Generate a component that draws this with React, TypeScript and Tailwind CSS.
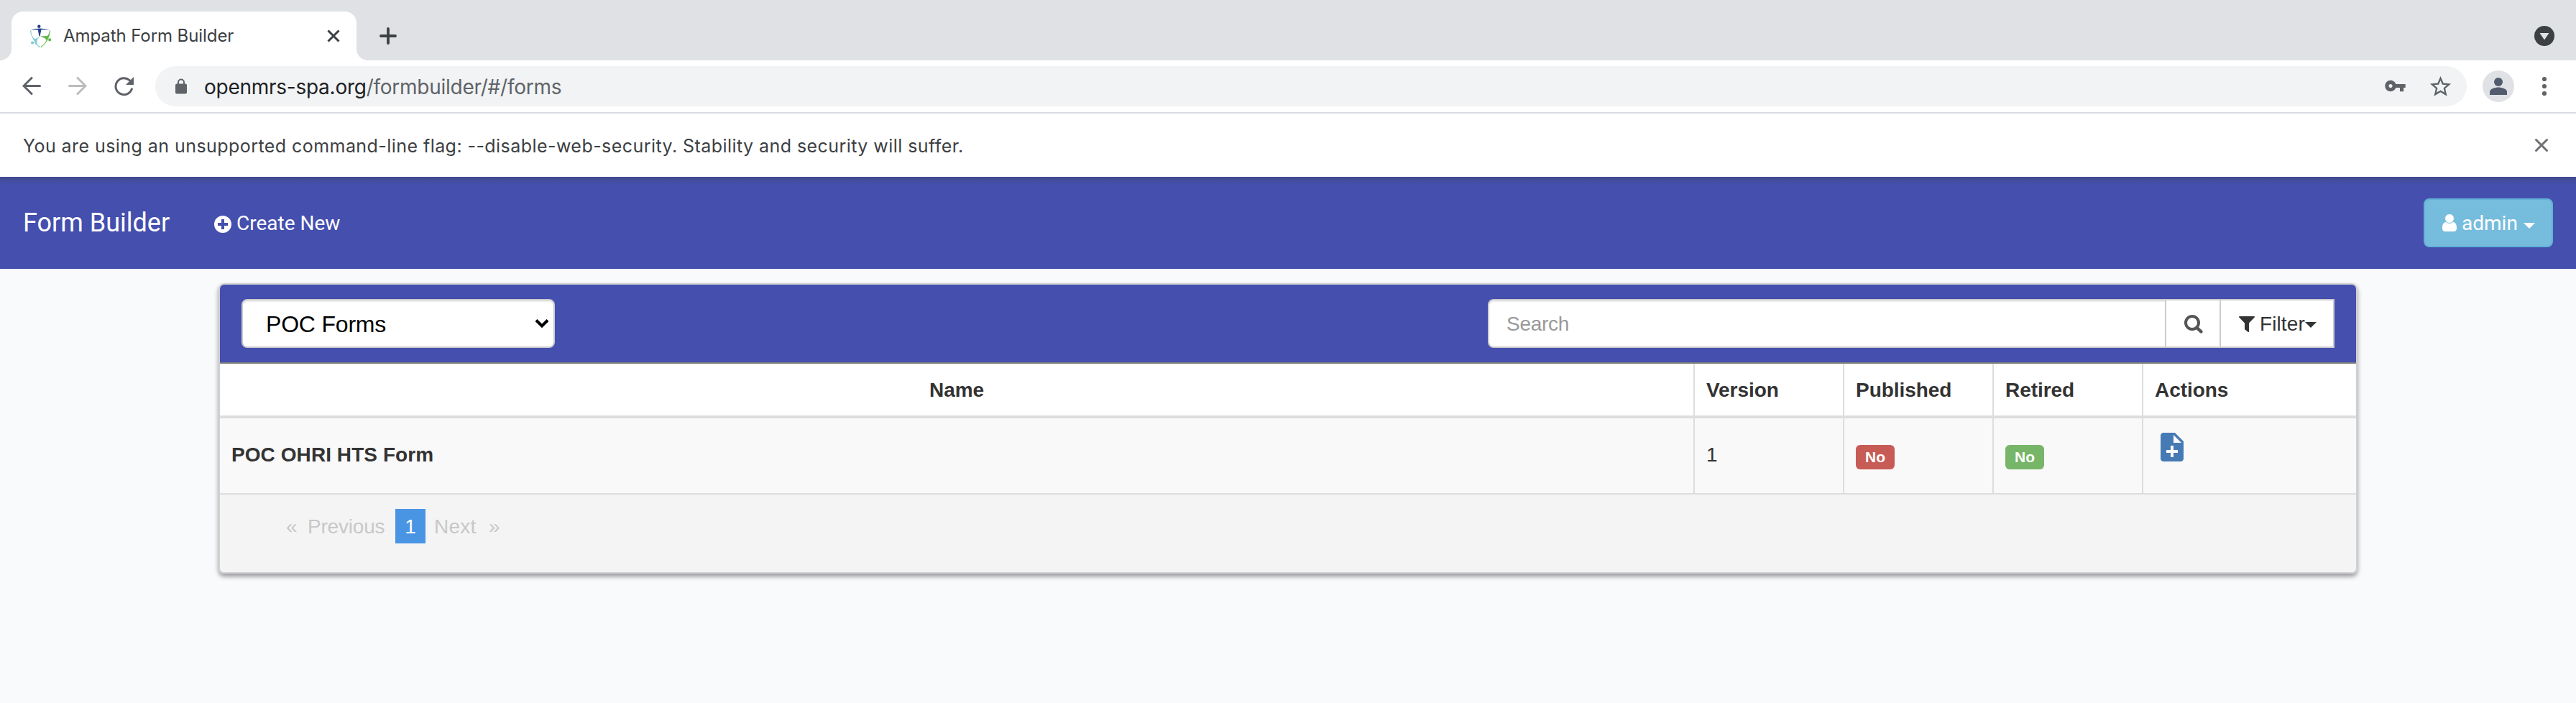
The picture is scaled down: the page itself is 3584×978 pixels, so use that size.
import type { ReactNode } from "react";

const inter = "font-['Inter',sans-serif]";
const roboto = "font-['Roboto',sans-serif]";

function TabStrip() {
  return (
    <div className="flex h-[84px] items-end bg-[#dfe1e5]">
      <div className="flex h-[68px] w-[16px] items-end bg-white">
        <div className="h-[84px] w-[16px] rounded-br-[16px] bg-[#dfe1e5]" />
      </div>
      <div className="flex h-[68px] w-[480px] items-center rounded-t-[16px] bg-white pl-[24px] pr-[22px]">
        <svg className="h-[34px] w-[32px] shrink-0" viewBox="0 0 32 34">
          <path d="M2.500 9.800C3 14 4.500 18 7.500 22" fill="none" stroke="#8fd0d8" strokeWidth="1.200" />
          <path d="M7.800 25C10 28.500 13 31.200 16 32.500" fill="none" stroke="#8fd0d8" strokeWidth="1.400" />
          <path d="M29.600 9.800C29.200 14 28 18 26 22 23.500 26.800 20.500 30 16.800 32.500" fill="none" stroke="#7cc56a" strokeWidth="1.300" />
          <circle cx="14.300" cy="3.800" r="2.200" fill="#26408f" />
          <path d="M2 9.600Q15 3.600 30 9.600 22 7.900 17.300 8.500L15.600 17.500H14.600L12.700 8.500Q8 8 2 9.600Z" fill="#26408f" />
          <path d="M16 17.200 26 17Q28 14.500 29.200 11 28.800 18 25 24.500 24.200 21.500 22.500 20.200Z" fill="#62b84e" />
          <circle cx="29.200" cy="22.300" r="2.100" fill="#62b84e" />
          <path d="M14.800 18.200 11.500 22.500Q11 26 12 29.500 8 26 4.500 18 7 20.800 9.300 21.200Z" fill="#7fcbd4" />
          <circle cx="5.100" cy="26.500" r="2.100" fill="#7fcbd4" />
        </svg>
        <span className={`${inter} ml-[16px] whitespace-nowrap text-[24px] leading-[30px] tracking-[-0.08px] text-[#3c4043]`}>
          Ampath Form Builder
        </span>
        <svg className="ml-auto mr-[1px] h-[18px] w-[18px]" viewBox="0 0 18 18" stroke="#3c4043" strokeWidth="3">
          <path d="M1.500 1.500 16.500 16.500M16.500 1.500 1.500 16.500" />
        </svg>
      </div>
      <div className="flex h-[68px] w-[16px] bg-white">
        <div className="h-[68px] w-[16px] rounded-bl-[16px] bg-[#dfe1e5]" />
      </div>
      <svg className="mb-[22px] ml-[16px] h-[24px] w-[24px]" viewBox="0 0 24 24" stroke="#3c4043" strokeWidth="3.800" strokeLinecap="round">
        <path d="M12 2v20M2 12h20" />
      </svg>
      <svg className="mb-[20px] ml-auto mr-[30px] h-[28px] w-[28px]" viewBox="0 0 28 28">
        <circle cx="14" cy="14" r="14" fill="#3c4043" />
        <path d="M7.500 10h13l-6.500 9.500z" fill="#dfe1e5" />
      </svg>
    </div>
  );
}

function Toolbar() {
  return (
    <div className="flex h-[74px] items-center border-b-2 border-[#dadce3] bg-white pl-[31px]">
      <svg className="h-[26px] w-[26px]" viewBox="0 0 26 26" fill="none" stroke="#5f6368" strokeWidth="3" strokeLinecap="round">
        <path d="M24.500 12.500H2M13 1.500 2 12.500 13 23.500" />
      </svg>
      <svg className="ml-[38px] h-[26px] w-[26px]" viewBox="0 0 26 26" fill="none" stroke="#babcbe" strokeWidth="3" strokeLinecap="round">
        <path d="M1.500 12.500H24M13 1.500 24 12.500 13 23.500" />
      </svg>
      <svg className="ml-[38px] h-[28px] w-[28px]" viewBox="0 0 28 28" fill="none">
        <path d="M24.400 17.800A11.500 11.500 0 1 1 21.200 5.600" stroke="#5f6368" strokeWidth="3" strokeLinecap="round" />
        <path d="M27 1v11H16z" fill="#5f6368" />
      </svg>
      <div className="ml-[29px] flex h-[56px] w-[3216px] items-center rounded-full bg-[#f1f3f4] pl-[28px] pr-[19px]">
        <svg className="h-[22px] w-[16px]" viewBox="0 0 16 22">
          <path d="M4 9V5.500a4 4 0 0 1 8 0V9" fill="none" stroke="#5f6368" strokeWidth="2" />
          <rect y="7.500" width="16" height="14" rx="2" fill="#5f6368" />
        </svg>
        <span className={`${inter} ml-[24px] pt-[1px] whitespace-nowrap text-[28px] leading-[34px] tracking-[-0.26px] text-[#5f6368]`}>
          <span className="text-[#202124]">openmrs-spa.org</span>/formbuilder/#/forms
        </span>
        <svg className="ml-auto -mt-[2px] h-[31px] w-[31px]" viewBox="0 0 24 24" fill="#5f6368">
          <path d="M12.650 10C11.830 7.670 9.610 6 7 6c-3.310 0-6 2.690-6 6s2.690 6 6 6c2.610 0 4.830-1.670 5.650-4H17v4h4v-4h2v-4H12.650zM7 14c-1.100 0-2-.9-2-2s.9-2 2-2 2 .9 2 2-.9 2-2 2z" />
        </svg>
        <svg className="ml-[30px] h-[35px] w-[35px]" viewBox="0 0 24 24" fill="#5f6368">
          <path d="M22 9.240l-7.190-.62L12 2 9.190 8.630 2 9.240l5.460 4.730L5.820 21 12 17.270 18.180 21l-1.630-7.030L22 9.240zM12 15.400l-3.760 2.270 1-4.280-3.320-2.880 4.380-.38L12 6.100l1.710 4.040 4.380.38-3.320 2.880 1 4.280L12 15.400z" />
        </svg>
      </div>
      <svg className="ml-[22px] h-[44px] w-[44px]" viewBox="0 0 44 44">
        <circle cx="22" cy="22" r="22" fill="#dfe1e5" />
        <circle cx="22" cy="16" r="6" fill="#525b6e" />
        <path d="M10 34v-4.500c0-4 8-6 12-6s12 2 12 6V34z" fill="#525b6e" />
      </svg>
      <svg className="ml-[38px] h-[28px] w-[8px]" viewBox="0 0 8 28" fill="#5f6368">
        <circle cx="4" cy="4" r="3.100" />
        <circle cx="4" cy="14" r="3.100" />
        <circle cx="4" cy="24" r="3.100" />
      </svg>
    </div>
  );
}

function InfoBar() {
  return (
    <div className="flex h-[88px] items-center justify-between bg-white pl-[32px] pr-[38px]">
      <span className={`${inter} pt-[1px] whitespace-nowrap text-[25px] leading-[30px] tracking-[0.44px] text-[#3c4043]`}>
        You are using an unsupported command-line flag: --disable-web-security. Stability and security will suffer.
      </span>
      <svg className="h-[20px] w-[20px]" viewBox="0 0 20 20" stroke="#6e7073" strokeWidth="3" strokeLinecap="round">
        <path d="M2.500 2.500 17.500 17.500M17.500 2.500 2.500 17.500" />
      </svg>
    </div>
  );
}

function NavBar() {
  return (
    <nav className={`${roboto} flex h-[128px] items-center bg-[#444fae] bg-linear-to-b from-[#424a8c] to-transparent to-[10px] pl-[32px] pr-[32px] text-white`}>
      <span className="w-[266px] whitespace-nowrap text-[36px] leading-[40px]">Form Builder</span>
      <svg className="mt-[4px] h-[24px] w-[24px]" viewBox="0 0 24 24">
        <circle cx="12" cy="12" r="12" fill="#fff" />
        <path d="M12 5v14M5 12h14" stroke="#444fae" strokeWidth="4" />
      </svg>
      <span className="ml-[7px] pt-[2px] whitespace-nowrap text-[28px] leading-[40px]">Create New</span>
      <button className="ml-auto flex h-[68px] w-[180px] items-center rounded-[8px] border-2 border-[#62b2d6] bg-[#76bcdc] pl-[24px]">
        <svg className="h-[24px] w-[20px]" viewBox="0 0 20 24">
          <path d="M5 11q5 3.500 10 0c4 .5 5 4 5 8.500 0 3-1.500 4.500-4 4.500H4c-2.500 0-4-1.500-4-4.500C0 15 1 11.500 5 11z" fill="#fff" />
          <circle cx="10" cy="6" r="6.400" fill="#fff" stroke="#76bcdc" strokeWidth="0.800" />
        </svg>
        <span className="ml-[7px] pt-[1px] text-[28px] leading-[40px]">admin</span>
        <svg className="ml-[8px] mt-[8px] h-[8px] w-[16px]" viewBox="0 0 16 8" fill="#fff">
          <path d="M0 0h16l-8 8z" />
        </svg>
      </button>
    </nav>
  );
}

function CardHeader() {
  return (
    <div className="flex h-[110px] items-center justify-between border-b-2 border-[#808080] bg-[#444fae] px-[30px]">
      <div className="flex h-[68px] w-[436px] items-center justify-between rounded-[8px] border-2 border-[#ccc] bg-white pl-[32px] pr-[6px] shadow-[inset_0_2px_2px_rgba(0,0,0,0.075)]">
        <span className="pt-[2px] text-[32px] leading-[40px] tracking-[-0.2px] text-black">POC Forms</span>
        <svg className="h-[14px] w-[20px]" viewBox="0 0 20 14" fill="none" stroke="#000" strokeWidth="4">
          <path d="M2 2.500 10 10.500 18 2.500" />
        </svg>
      </div>
      <div className="flex h-[68px] text-[28px] leading-[40px]">
        <div className="flex w-[944px] items-center rounded-l-[8px] border-2 border-[#ccc] bg-white pl-[24px] pt-[1px] tracking-[-0.3px] text-[#999] shadow-[inset_0_2px_2px_rgba(0,0,0,0.075)]">
          Search
        </div>
        <div className="flex w-[74px] items-center border-y-2 border-[#ccc] bg-white pl-[24px]">
          <svg className="h-[28px] w-[28px]" viewBox="0 0 28 28" fill="none" stroke="#555" strokeWidth="4">
            <circle cx="12" cy="13" r="9" />
            <path d="M18.500 19.800 24.400 25.400" strokeLinecap="round" strokeWidth="4.400" />
          </svg>
        </div>
        <div className="flex w-[160px] items-center border-2 border-[#ccc] bg-white pl-[25px] text-[#333]">
          <svg className="mt-[1px] h-[22px] w-[22px]" viewBox="0 0 22 22" fill="#333">
            <path d="M.8 0h20.400c.8 0 1 .8.500 1.400L14 9.500v11.700c0 .8-.8 1-1.400.5L8.500 18.500c-.3-.3-.5-.5-.5-1V9.500L.3 1.400C-.2.800 0 0 .8 0z" />
          </svg>
          <span className="ml-[7px] pt-[1px] tracking-[0.1px]">Filter</span>
          <svg className="mt-[3px] h-[8px] w-[16px] shrink-0" viewBox="0 0 16 8" fill="#333">
            <path d="M0 0h16l-8 8z" />
          </svg>
        </div>
      </div>
    </div>
  );
}

function Badge({ tone, children }: { tone: string; children: ReactNode }) {
  return (
    <span className={`mt-[4px] flex h-[34px] w-[54px] items-center justify-center rounded-[6px] text-[21px] leading-[24px] font-bold text-white ${tone}`}>
      {children}
    </span>
  );
}

const columns = "grid grid-cols-[2050px_208px_208px_208px_298px]";
const cell = "flex items-center border-l-2 border-[#ddd] pl-[16px]";

function FormsTable() {
  return (
    <div className="text-[28px] leading-[40px] text-[#333]">
      <div className={`${columns} h-[76px] border-b-4 border-[#ddd] bg-white font-bold tracking-[-0.05px]`}>
        <div className="flex items-center justify-center pt-[2px]">Name</div>
        <div className={`${cell} pt-[2px]`}>Version</div>
        <div className={`${cell} pt-[2px]`}>Published</div>
        <div className={`${cell} pt-[2px]`}>Retired</div>
        <div className={`${cell} pt-[2px]`}>Actions</div>
      </div>
      <div className={`${columns} h-[106px] border-b-2 border-[#ddd] bg-[#f9f9f9]`}>
        <div className="flex items-center pb-[3px] pl-[16px] font-bold tracking-[0.07px]">POC OHRI HTS Form</div>
        <div className={`${cell} pb-[3px]`}>1</div>
        <div className={cell}>
          <Badge tone="bg-[#c75c56]">No</Badge>
        </div>
        <div className={cell}>
          <Badge tone="bg-[#77b668]">No</Badge>
        </div>
        <div className={`${cell} pb-[24px]`}>
          <svg className="h-[48px] w-[48px]" viewBox="0 0 24 24" fill="#467ab5">
            <path d="M14 2H6c-1.100 0-1.990.9-1.990 2L4 20c0 1.100.89 2 1.990 2H18c1.100 0 2-.9 2-2V8l-6-6zm2 14h-3v3h-2v-3H8v-2h3v-3h2v3h3v2zm-3-7V3.500L18.500 9H13z" />
          </svg>
        </div>
      </div>
    </div>
  );
}

function Pagination() {
  return (
    <div className="flex h-[108px] items-start bg-[#f4f4f4] pl-[92px] pt-[20px] text-[28px] leading-[50px] text-[#c8c8c8]">
      <span className="w-[30px]">«</span>
      <span className="w-[122px] tracking-[-0.2px]">Previous</span>
      <span className="h-[48px] w-[42px] bg-[#4a95e3] text-center text-white">1</span>
      <span className="ml-[12px] w-[76px] tracking-[0.2px]">Next</span>
      <span>»</span>
    </div>
  );
}

export default function App() {
  return (
    <div className="h-[978px] w-[3584px] overflow-hidden bg-[#f9fafc]">
      <TabStrip />
      <Toolbar />
      <InfoBar />
      <NavBar />
      <main className="mx-auto mt-[20px] w-[2976px] overflow-hidden rounded-[8px] border-2 border-[#d0d0d2] font-['Liberation_Sans',sans-serif] shadow-[0_4px_6px_rgba(0,0,0,0.4)]">
        <CardHeader />
        <FormsTable />
        <Pagination />
      </main>
    </div>
  );
}
